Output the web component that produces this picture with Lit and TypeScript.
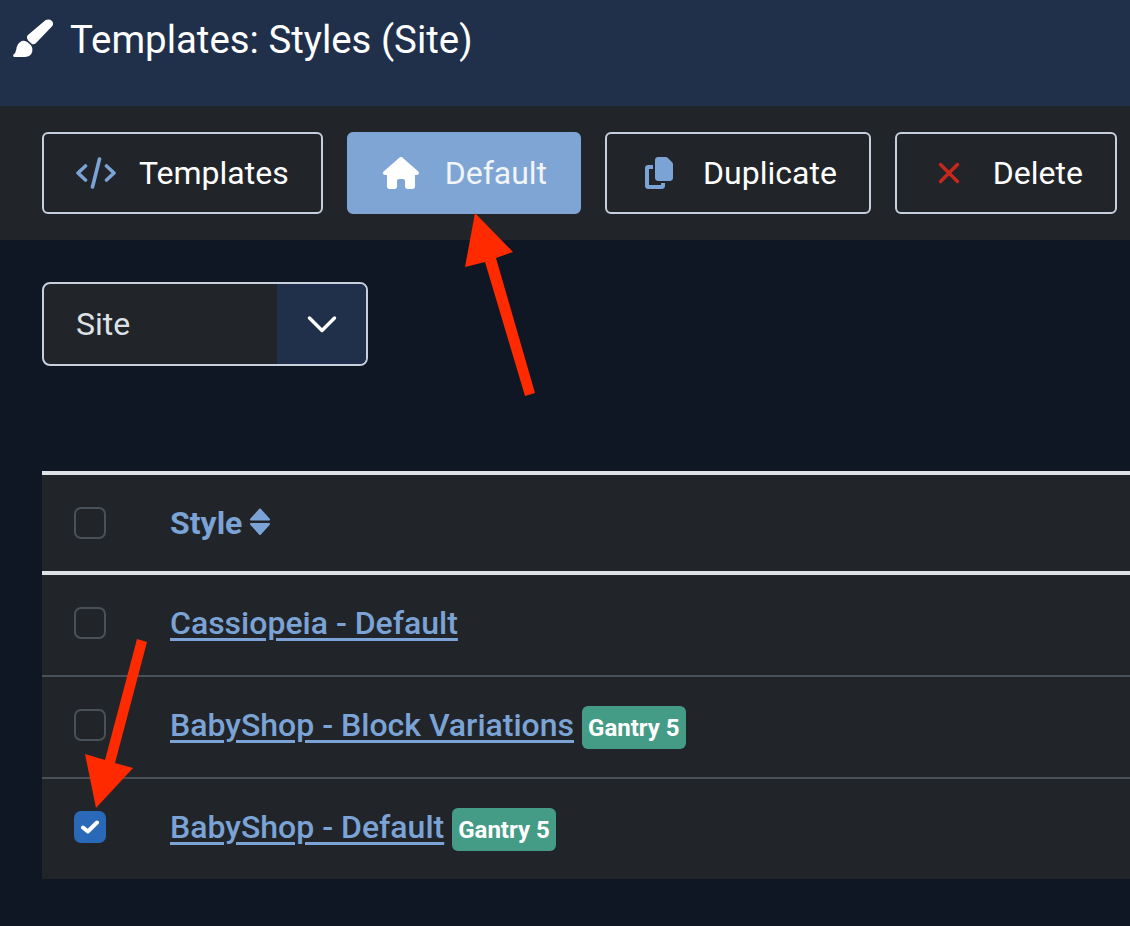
import { LitElement, html, css, svg } from "lit";
import { customElement } from "lit/decorators.js";

const brush = svg`<path d="M122 24Q133 20 141 27Q147 34 142 42L96 90Q88 100 80 95L70 86Q63 78 68 70ZM50 87Q60 84 68 91L78 100Q84 108 82 118Q78 135 60 135L28 135Q22 133 25 128Q32 124 34 112Q36 94 50 87Z"/>`;
const house = svg`<path d="M575.8 255.5c0 18-15 32.1-32 32.1h-32l.7 160.2c0 2.7-.2 5.4-.5 8.1V472c0 22.1-17.9 40-40 40H456c-1.1 0-2.2 0-3.3-.1c-1.4 .1-2.8 .1-4.2 .1H416 392c-22.1 0-40-17.9-40-40V448 384c0-17.7-14.3-32-32-32H256c-17.7 0-32 14.3-32 32v64 24c0 22.1-17.9 40-40 40H160 128.1c-1.5 0-3-.1-4.5-.2c-1.2 .1-2.4 .2-3.6 .2H104c-22.1 0-40-17.9-40-40V360c0-.9 0-1.9 .1-2.8V287.6H32c-18 0-32-14-32-32.1c0-9 3-17 10-24L266.4 8c7-7 15-8 22-8s15 2 21 7L564.8 231.5c8 7 12 15 11 24z"/>`;
const copy = svg`<path d="M208 0H332.1c12.7 0 24.9 5.1 33.9 14.1l67.9 67.9c9 9 14.1 21.2 14.1 33.9V336c0 26.5-21.5 48-48 48H208c-26.5 0-48-21.5-48-48V48c0-26.5 21.5-48 48-48zM48 128h80v64H64V448H256V416h64v48c0 26.5-21.5 48-48 48H48c-26.5 0-48-21.5-48-48V176c0-26.5 21.5-48 48-48z"/>`;

@customElement("app-root")
export class AppRoot extends LitElement {
  static styles = css`
    :host {
      display: block;
      min-height: 926px;
      height: 926px;
      overflow: hidden;
      background: #0f1725;
      font-family: Roboto, "Liberation Sans", sans-serif;
      position: relative;
      color: #fff;
    }
    .head {
      height: 106px;
      box-sizing: border-box;
      background: #20304b;
      display: flex;
      align-items: flex-start;
      gap: 15px;
      padding: 16px 0 0 12px;
    }
    .head svg { width: 43px; height: 43px; fill: #fff; flex: none; }
    .head h1 { margin: 0; font-size: 38.4px; font-weight: 400; line-height: 48px; white-space: nowrap; }
    .toolbar {
      height: 134px;
      box-sizing: border-box;
      background: #212529;
      display: flex;
      gap: 24px;
      padding: 26px 0 0 42px;
    }
    .btn {
      height: 82px;
      box-sizing: border-box;
      border: 2px solid #c5d0dc;
      border-radius: 6px;
      padding: 0 32px;
      display: flex;
      align-items: center;
      gap: 24px;
      font-size: 32px;
      color: #fff;
      white-space: nowrap;
    }
    .btn.tight { gap: 23px; }
    .btn.primary {
      background: #7fa5d4;
      border-color: #7fa5d4;
      color: #f1f4f8;
    }
    .ico {
      width: 40px;
      height: 32px;
      display: block;
      flex: none;
    }
    .blue { fill: #7ba3d6; }
    .white { fill: #fff; }
    .select {
      margin: 42px 0 0 42px;
      width: 326px;
      height: 84px;
      box-sizing: border-box;
      border: 2px solid #c5d0dc;
      border-radius: 8px;
      background: #212529;
      display: flex;
      overflow: hidden;
    }
    .select .val {
      flex: 1;
      display: flex;
      align-items: center;
      padding-left: 32px;
      font-size: 32px;
      color: #dee2e6;
    }
    .select .arrow {
      width: 89px;
      background: #20304b;
      display: flex;
      align-items: center;
      justify-content: center;
    }
    .select .arrow svg { width: 30px; height: 19px; }
    .table {
      margin: 105px 0 0 42px;
      background: #212529;
      border-top: 4px solid #dee2e6;
    }
    .row {
      display: flex;
      align-items: center;
      padding: 0 0 4px 32px;
      gap: 64px;
      box-sizing: border-box;
      font-size: 32px;
      height: 102px;
      border-bottom: 2px solid #495057;
    }
    .row.hdr { height: 100px; padding-bottom: 0; border-bottom: 4px solid #dee2e6; }
    .row.last { height: 100px; border-bottom: 0; }
    .cb {
      width: 32px;
      height: 32px;
      box-sizing: border-box;
      border: 2px solid #495057;
      border-radius: 7px;
      flex: none;
      display: flex;
      align-items: center;
      justify-content: center;
    }
    .cb.on { background: #2a69b8; border-color: #2a69b8; }
    .cb svg { width: 18px; height: 14px; }
    .cell { display: flex; align-items: center; gap: 8px; }
    .th { font-weight: 700; color: #7ba3d6; }
    .th-wrap { gap: 7px; }
    .sort { width: 22px; height: 28px; display: block; margin-bottom: 2px; }
    .link { color: #7ba3d6; text-decoration: underline; text-decoration-thickness: 3px; text-underline-offset: 4px; font-weight: 500; white-space: nowrap; }
    .badge {
      background: #459c86;
      color: #fff;
      border-radius: 6px;
      font-size: 24px;
      font-weight: 700;
      line-height: 45px;
      height: 43px;
      padding: 0 6px;
      white-space: nowrap;
      margin-top: 4px;
    }
    .overlay {
      position: absolute;
      left: 0;
      top: 0;
      width: 1130px;
      height: 926px;
      pointer-events: none;
    }
  `;

  private row(name: string, badge: boolean, checked: boolean, cls: string) {
    return html`<div class="row ${cls}">
      <span class="cb ${checked ? "on" : ""}">${checked
        ? html`<svg viewBox="0 0 18 14"><path d="M2 7.5 6.8 11.5 16 2.500" fill="none" stroke="#fff" stroke-width="4" stroke-linecap="round" stroke-linejoin="round"/></svg>`
        : ""}</span>
      <div class="cell">
        <span class="link">${name}</span>
        ${badge ? html`<span class="badge">Gantry 5</span>` : ""}
      </div>
    </div>`;
  }

  render() {
    return html`
      <div class="head">
        <svg viewBox="21 12 129 129">${brush}</svg>
        <h1>Templates: Styles (Site)</h1>
      </div>
      <div class="toolbar">
        <div class="btn tight">
          <svg class="ico" viewBox="0 0 40 32"><path d="M9.5 9 2 16l7.5 7M30.5 9 38 16l-7.5 7" fill="none" stroke="#7ba3d6" stroke-width="3.6" stroke-linecap="round" stroke-linejoin="round"/><path d="M23.5 2 16.500 30" fill="none" stroke="#7ba3d6" stroke-width="3.6" stroke-linecap="round"/></svg>
          Templates
        </div>
        <div class="btn primary">
          <svg class="ico white" viewBox="0 0 576 512">${house}</svg>
          Default
        </div>
        <div class="btn">
          <svg class="ico blue" viewBox="0 0 448 512">${copy}</svg>
          Duplicate
        </div>
        <div class="btn">
          <svg class="ico" viewBox="0 0 40 32"><path d="M11.500 7.500 28.500 24.500M28.500 7.500 11.500 24.500" stroke="#c8281c" stroke-width="3.4" stroke-linecap="round"/></svg>
          Delete
        </div>
      </div>
      <div class="select">
        <div class="val">Site</div>
        <div class="arrow">
          <svg viewBox="0 0 30 19"><path d="M2.500 3 15 15.500 27.500 3" fill="none" stroke="#fff" stroke-width="3.400" stroke-linecap="round" stroke-linejoin="round"/></svg>
        </div>
      </div>
      <div class="table">
        <div class="row hdr">
          <span class="cb"></span>
          <div class="cell th-wrap">
            <span class="th">Style</span>
            <svg class="sort" viewBox="0 0 22 28"><path d="M11 1.500 20 11.500H2ZM2 16H20L11 26Z" fill="#7ba3d6" stroke="#7ba3d6" stroke-width="2" stroke-linejoin="round"/></svg>
          </div>
        </div>
        ${this.row("Cassiopeia - Default", false, false, "")}
        ${this.row("BabyShop - Block Variations", true, false, "")}
        ${this.row("BabyShop - Default", true, true, "last")}
      </div>
      <svg class="overlay" viewBox="0 0 1130 926">
        <polygon fill="#ff2a00" points="475,213 513,252 496,258 535,393 525,396 485,262 465,267"/>
        <polygon fill="#ff2a00" points="96,808 85,754 105,760 137,639 147,642 115,763 133,768"/>
      </svg>
    `;
  }
}
